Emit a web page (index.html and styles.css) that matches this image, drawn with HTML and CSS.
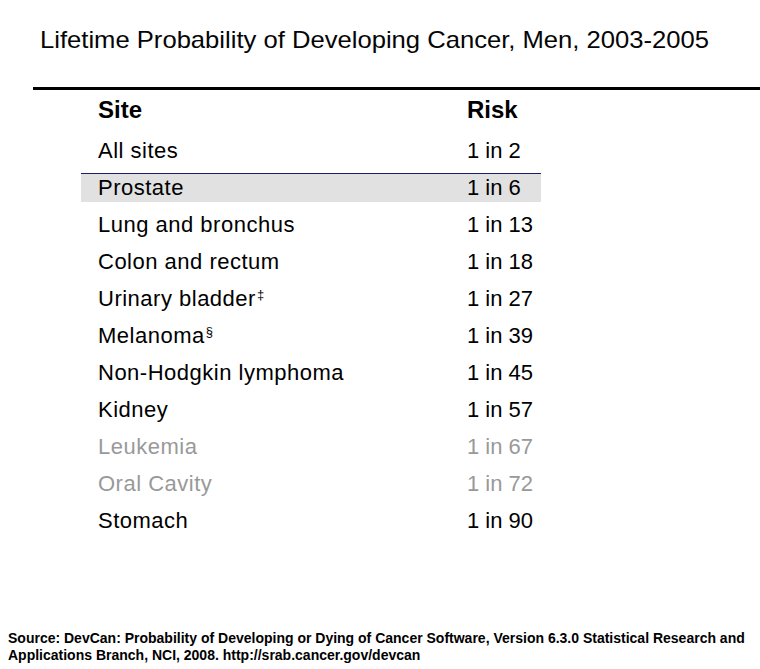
FILE: index.html
```html
<!DOCTYPE html>
<html lang="en">
<head>
<meta charset="utf-8">
<title>Lifetime Probability of Developing Cancer, Men, 2003-2005</title>
<link rel="stylesheet" href="styles.css">
</head>
<body>
<div class="slide">
  <h1 class="title">Lifetime Probability of Developing Cancer, Men, 2003-2005</h1>
  <div class="rule"></div>
  <div class="table">
    <div class="row head"><span class="site">Site</span><span class="risk">Risk</span></div>
    <div class="row"><span class="site">All sites</span><span class="risk">1 in 2</span></div>
    <div class="row highlight"><span class="site">Prostate</span><span class="risk">1 in 6</span></div>
    <div class="row"><span class="site">Lung and bronchus</span><span class="risk">1 in 13</span></div>
    <div class="row"><span class="site">Colon and rectum</span><span class="risk">1 in 18</span></div>
    <div class="row"><span class="site">Urinary bladder<sup class="mark">‡</sup></span><span class="risk">1 in 27</span></div>
    <div class="row"><span class="site">Melanoma<sup class="mark">§</sup></span><span class="risk">1 in 39</span></div>
    <div class="row"><span class="site">Non-Hodgkin lymphoma</span><span class="risk">1 in 45</span></div>
    <div class="row"><span class="site">Kidney</span><span class="risk">1 in 57</span></div>
    <div class="row muted"><span class="site">Leukemia</span><span class="risk">1 in 67</span></div>
    <div class="row muted"><span class="site">Oral Cavity</span><span class="risk">1 in 72</span></div>
    <div class="row"><span class="site">Stomach</span><span class="risk">1 in 90</span></div>
  </div>
  <p class="source">Source: DevCan: Probability of Developing or Dying of Cancer Software, Version 6.3.0 Statistical Research and Applications Branch, NCI, 2008. http://srab.cancer.gov/devcan</p>
</div>
</body>
</html>
```
FILE: styles.css
```css
html, body {
  margin: 0;
  padding: 0;
  background: #ffffff;
}

body {
  font-family: "Liberation Sans", Arial, sans-serif;
  color: #000000;
  width: 760px;
  height: 669px;
  overflow: hidden;
}

.slide {
  display: flex;
  flex-direction: column;
  height: 669px;
}

.title {
  align-self: flex-start;
  margin: 0;
  padding: 26px 0 0 40px;
  font-size: 24px;
  line-height: 28px;
  font-weight: normal;
  white-space: nowrap;
  transform: scaleX(1.067);
  transform-origin: 40px 0;
  color: #050505;
}

.rule {
  margin: 33px 0 0 33px;
  height: 3px;
  background: #000000;
}

.table {
  display: flex;
  flex-direction: column;
  gap: 9px;
  margin: 6px 0 0 81px;
  width: 460px;
}

.row {
  display: grid;
  grid-template-columns: 386px 1fr;
  height: 28px;
  line-height: 28px;
  font-size: 22px;
  color: #000000;
}

.site {
  padding-left: 17px;
  white-space: nowrap;
  letter-spacing: 0.5px;
}

.head {
  font-size: 24px;
  font-weight: bold;
  margin-bottom: 4px;
}

.head .site {
  letter-spacing: 0;
}

.highlight {
  background: #e1e1e1;
  box-shadow: 0 -1px 0 #1c1c6a;
}

.muted {
  color: #999999;
}

.mark {
  font-size: 13px;
  line-height: 0;
  vertical-align: 7px;
  margin-left: 1px;
  letter-spacing: 0;
}

.source {
  margin: auto 0 0 0;
  padding: 0 10px 5px 8px;
  font-size: 14px;
  line-height: 17px;
  font-weight: bold;
  color: #000000;
}
```
